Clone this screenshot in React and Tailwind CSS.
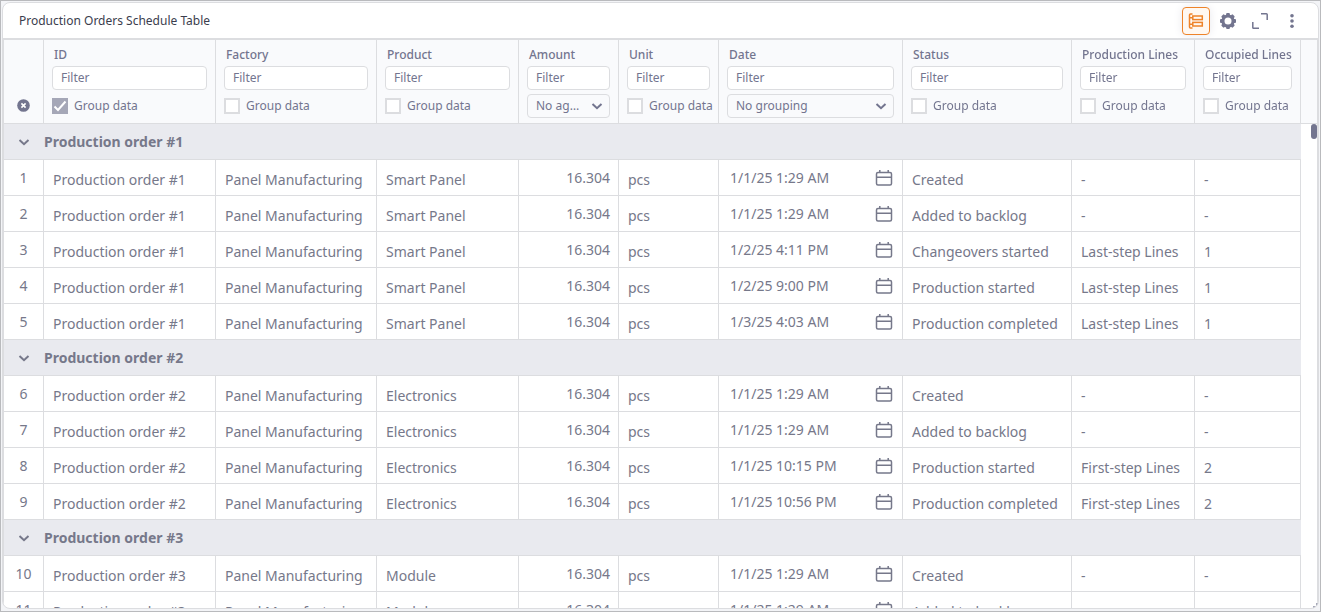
import { useState } from "react";

const COLUMNS = [
  { key: "id", title: "ID", grouping: "check" },
  { key: "factory", title: "Factory", grouping: "check" },
  { key: "product", title: "Product", grouping: "check" },
  { key: "amount", title: "Amount", grouping: "select", options: ["No aggregation", "Sum", "Average"] },
  { key: "unit", title: "Unit", grouping: "check" },
  { key: "date", title: "Date", grouping: "select", options: ["No grouping", "Day", "Month", "Year"] },
  { key: "status", title: "Status", grouping: "check" },
  { key: "lines", title: "Production Lines", grouping: "check" },
  { key: "occupied", title: "Occupied Lines", grouping: "check" }
];

const ORDERS = [
  {
    id: "Production order #1",
    product: "Smart Panel",
    steps: [
      ["1/1/25 1:29 AM", "Created", "-", "-"],
      ["1/1/25 1:29 AM", "Added to backlog", "-", "-"],
      ["1/2/25 4:11 PM", "Changeovers started", "Last-step Lines", "1"],
      ["1/2/25 9:00 PM", "Production started", "Last-step Lines", "1"],
      ["1/3/25 4:03 AM", "Production completed", "Last-step Lines", "1"]
    ]
  },
  {
    id: "Production order #2",
    product: "Electronics",
    steps: [
      ["1/1/25 1:29 AM", "Created", "-", "-"],
      ["1/1/25 1:29 AM", "Added to backlog", "-", "-"],
      ["1/1/25 10:15 PM", "Production started", "First-step Lines", "2"],
      ["1/1/25 10:56 PM", "Production completed", "First-step Lines", "2"]
    ]
  },
  {
    id: "Production order #3",
    product: "Module",
    steps: [
      ["1/1/25 1:29 AM", "Created", "-", "-"],
      ["1/1/25 1:29 AM", "Added to backlog", "-", "-"]
    ]
  }
];

function Chevron({ className }) {
  return (
    <svg viewBox="0 0 12 12" className={className} fill="none" stroke="currentColor" strokeWidth="2" aria-hidden="true">
      <path d="M1.5 4 6 8.2 10.5 4" />
    </svg>
  );
}

function CalendarIcon() {
  return (
    <svg viewBox="0 0 18 18" className="size-[18px]" fill="none" stroke="currentColor" strokeWidth="1.5" aria-hidden="true">
      <rect x="1.5" y="3.5" width="15" height="12.5" rx="1.5" />
      <path d="M1.5 8.2h15M4.8 1v3M13.2 1v3" />
    </svg>
  );
}

function GroupIcon() {
  return (
    <svg viewBox="0 0 16 16" className="size-4" fill="none" stroke="currentColor" strokeWidth="1.5" aria-hidden="true">
      <path d="M4.5 1H2.5Q1.5 1 1.5 2v12q0 1 1 1h2M1.5 4.8H5M1.5 11.2H5" />
      <rect x="4.8" y="3" width="9.5" height="3.6" />
      <rect x="4.8" y="9.4" width="9.5" height="3.6" />
    </svg>
  );
}

function GearIcon() {
  return (
    <svg viewBox="0 0 16 16" className="size-4" aria-hidden="true">
      <g fill="currentColor">
        <circle cx="8" cy="8" r="6.6" />
        <rect x="6.1" y="0" width="3.8" height="16" rx="1" />
        <rect x="6.1" y="0" width="3.8" height="16" rx="1" transform="rotate(45 8 8)" />
        <rect x="6.1" y="0" width="3.8" height="16" rx="1" transform="rotate(90 8 8)" />
        <rect x="6.1" y="0" width="3.8" height="16" rx="1" transform="rotate(135 8 8)" />
      </g>
      <circle cx="8" cy="8" r="3.5" fill="#fff" />
    </svg>
  );
}

function ColumnHead({ column }) {
  const [grouped, setGrouped] = useState(column.key === "id");

  return (
    <th scope="col" className="border-r border-b border-[#dcdde0] px-2 pt-[7px] pb-[5px] text-left align-top font-normal">
      <div className="mb-[3px] ml-0.5 text-xs leading-4 font-medium whitespace-nowrap">{column.title}</div>
      <input
        type="text"
        placeholder="Filter"
        aria-label={`Filter ${column.title}`}
        className="mb-1 block h-6 w-full rounded border border-[#dcdde0] bg-white px-2 pb-0.5 text-xs outline-none placeholder:text-[#73758f]"
      />
      {column.grouping === "check" ? (
        <label className="flex h-6 items-center gap-1.5 text-xs whitespace-nowrap">
          <span className="relative flex size-4 shrink-0">
            <input
              type="checkbox"
              checked={grouped}
              onChange={(e) => setGrouped(e.target.checked)}
              className="size-4 appearance-none border-2 border-[#dcdde0] bg-white checked:border-[#a5a7b7] checked:bg-[#a5a7b7]"
            />
            {grouped && (
              <svg viewBox="0 0 16 16" className="pointer-events-none absolute inset-0 size-4" fill="none" stroke="#fff" strokeWidth="2" aria-hidden="true">
                <path d="M2.5 8.5 6 12 13.5 3.5" />
              </svg>
            )}
          </span>
          Group data
        </label>
      ) : (
        <div className="relative">
          <select
            aria-label={`${column.title} grouping`}
            className="block h-6 w-full appearance-none rounded border border-[#dcdde0] bg-[#f9fafc] pr-7 pl-2 text-xs text-ellipsis outline-none"
          >
            {column.options.map((option) => (
              <option key={option}>{option}</option>
            ))}
          </select>
          <Chevron className="pointer-events-none absolute top-1.5 right-[7px] size-3" />
        </div>
      )}
    </th>
  );
}

function OrderRow({ order, step, number }) {
  const [date, status, lines, occupied] = step;
  const cell = "border-r border-b border-[#dcdde0] px-[9px] pt-1 whitespace-nowrap";
  const raised = "border-r border-b border-[#dcdde0] whitespace-nowrap";

  return (
    <tr className="h-9">
      <td className={`${raised} text-center`}>{number}</td>
      <td className={cell}>{order.id}</td>
      <td className={cell}>Panel Manufacturing</td>
      <td className={cell}>{order.product}</td>
      <td className={`${raised} pr-2 text-right`}>16.304</td>
      <td className={cell}>pcs</td>
      <td className={`${raised} pr-[9px] pl-[11px]`}>
        <div className="flex items-center justify-between">
          {date}
          <CalendarIcon />
        </div>
      </td>
      <td className={cell}>{status}</td>
      <td className={cell}>{lines}</td>
      <td className={cell}>{occupied}</td>
      <td />
    </tr>
  );
}

export default function App() {
  const [closed, setClosed] = useState([]);

  function toggle(id) {
    setClosed(closed.includes(id) ? closed.filter((c) => c !== id) : [...closed, id]);
  }

  let number = 0;

  return (
    <div className="h-screen border border-[#b9babd] bg-[#f3f4f7] p-px font-['Noto_Sans',sans-serif] text-[#73758f]">
      <main className="relative flex h-[calc(100%-1px)] flex-col overflow-hidden rounded-lg border border-[#dcdde0] bg-white">
        <header className="flex h-[37px] shrink-0 items-center justify-between border-b-2 border-[#dcdde0] pr-3 pl-4">
          <h1 className="text-xs text-[#3b3d4d]">Production Orders Schedule Table</h1>
          <div className="flex items-center gap-1">
            <button aria-label="Group rows" className="flex size-7 items-center justify-center rounded border border-[#ee8329] bg-[#fff8f1] text-[#ee8329] shadow-[0_0_10px_#e9e9ee]">
              <GroupIcon />
            </button>
            <button aria-label="Settings" className="flex size-7 items-center justify-center hover:bg-[#f3f4f7]">
              <GearIcon />
            </button>
            <button aria-label="Expand" className="flex size-7 items-center justify-center hover:bg-[#f3f4f7]">
              <svg viewBox="0 0 16 16" className="size-4" fill="none" stroke="currentColor" strokeWidth="1.5" aria-hidden="true">
                <path d="M9 .8h5.4q.8 0 .8.8V7M.8 9v5.4q0 .8.8.8H7" />
              </svg>
            </button>
            <button aria-label="More" className="flex size-7 items-center justify-center hover:bg-[#f3f4f7]">
              <svg viewBox="0 0 16 16" className="size-4" fill="currentColor" aria-hidden="true">
                <circle cx="8" cy="2.8" r="1.8" />
                <circle cx="8" cy="8" r="1.8" />
                <circle cx="8" cy="13.2" r="1.8" />
              </svg>
            </button>
          </div>
        </header>

        <div className="relative min-h-0 flex-1 border-x border-[#dcdde0]">
          <div className="h-full overflow-y-auto [scrollbar-width:none]">
            <table className="w-full table-fixed border-separate border-spacing-0 text-sm leading-5 text-[#76788a]">
              <colgroup>
                <col className="w-10" />
                <col className="w-[172px]" />
                <col className="w-[161px]" />
                <col className="w-[142px]" />
                <col className="w-[100px]" />
                <col className="w-[100px]" />
                <col className="w-[184px]" />
                <col className="w-[169px]" />
                <col className="w-[123px]" />
                <col className="w-[106px]" />
                <col />
              </colgroup>
              <thead className="sticky top-0 z-10 bg-[#f9fafc] text-[#73758f]">
                <tr>
                  <th className="border-r border-b border-[#dcdde0] pb-[11px] align-bottom">
                    <button aria-label="Clear filters" className="mx-auto block">
                      <svg viewBox="0 0 13 13" className="size-[13px]" aria-hidden="true">
                        <circle cx="6.5" cy="6.5" r="6.3" fill="currentColor" />
                        <path d="m4.4 4.4 4.2 4.2M8.6 4.4 4.4 8.6" stroke="#fff" strokeWidth="1.6" />
                      </svg>
                    </button>
                  </th>
                  {COLUMNS.map((column) => (
                    <ColumnHead key={column.key} column={column} />
                  ))}
                  <th className="border-b border-[#dcdde0]" />
                </tr>
              </thead>
              {ORDERS.map((order) => {
                const open = !closed.includes(order.id);
                return (
                  <tbody key={order.id}>
                    <tr className="h-9">
                      <td className="border-b border-[#dcdde0] bg-[#e9eaef]">
                        <button aria-label={`Toggle ${order.id}`} aria-expanded={open} onClick={() => toggle(order.id)} className="mx-auto block">
                          <Chevron className={open ? "size-3" : "size-3 -rotate-90"} />
                        </button>
                      </td>
                      <th scope="rowgroup" colSpan={9} className="border-b border-[#dcdde0] bg-[#e9eaef] text-left font-bold">
                        {order.id}
                      </th>
                      <td />
                    </tr>
                    {open && order.steps.map((step) => {
                      number += 1;
                      return <OrderRow key={number} order={order} step={step} number={number} />;
                    })}
                  </tbody>
                );
              })}
            </table>
          </div>
          {/* scroll thumb */}
          <div className="absolute top-[84px] right-0 z-20 h-[15px] w-1.5 rounded-full bg-[#73758f]" />
        </div>
        <div className="absolute right-0 bottom-0 z-20 size-[5px] border-r-2 border-b-2 border-[#a5a7b7]" />
      </main>
    </div>
  );
}
